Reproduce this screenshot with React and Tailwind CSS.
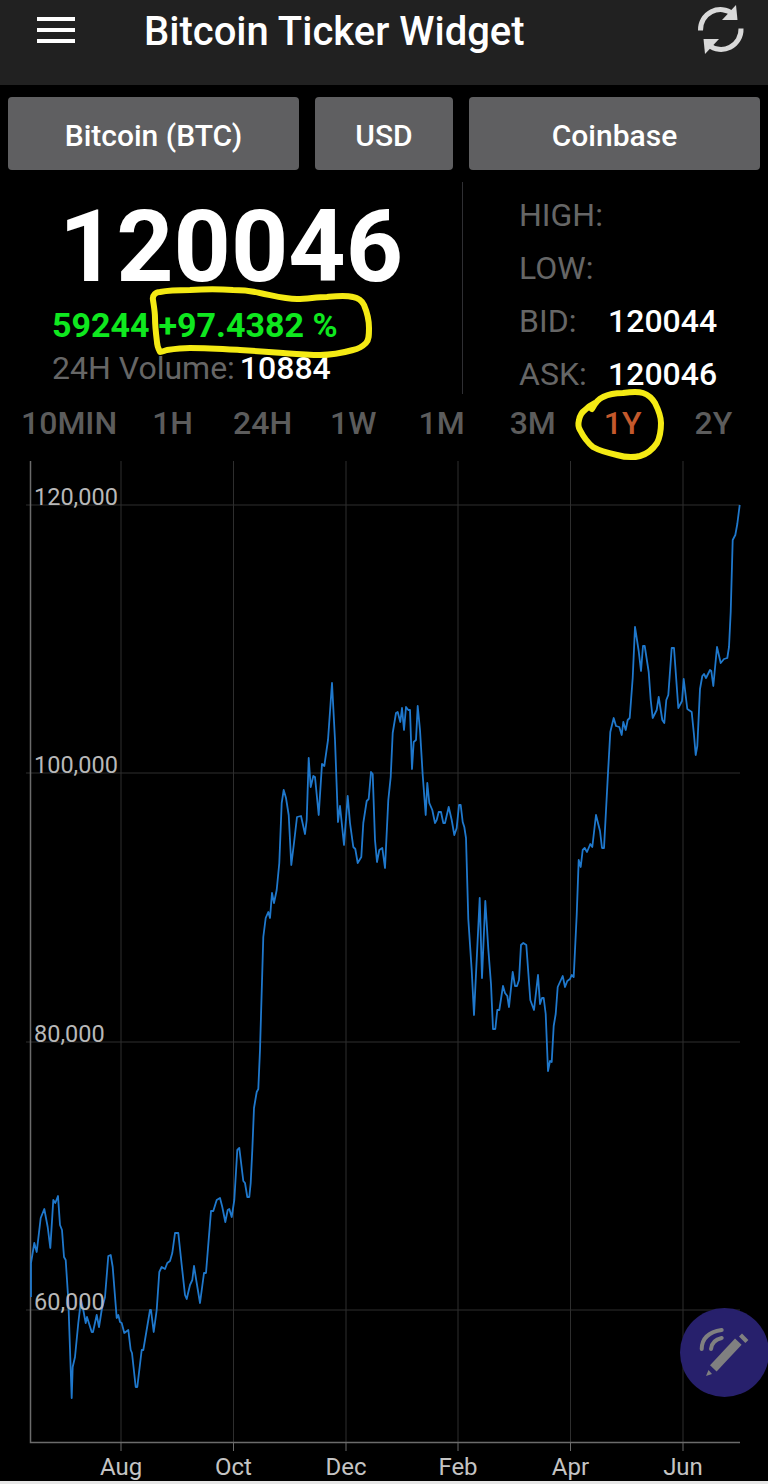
import React from "react";

const priceLine = "31,1297 31,1263 34.3,1243 36.7,1252 40.7,1218 44.3,1209 47.7,1227 50.3,1248 53.3,1200 55.3,1203 58,1196 60,1225 62,1230 64,1257 65.7,1260 68.3,1300 71.7,1398 72.7,1367 75,1357 78.3,1323 81,1300 83.3,1310 85.7,1323 87,1317 91.7,1332 93,1332 96.7,1315 99,1327 101.7,1310 105,1297 108.3,1256 110.7,1255 112.7,1267 116.7,1318 118.3,1315 120,1322 121.7,1323 124.3,1333 128.3,1330 130.7,1350 132,1353 135.7,1387 137.3,1387 141.7,1350 143.3,1350 150,1310 151,1310 153.7,1332 156.7,1310 159.3,1272 161.7,1267 165,1269 167.3,1263 170,1261 172.3,1253 175,1233 178.3,1233 181.7,1265 185,1295 186.7,1299 190,1285 192.3,1280 194,1266 196.7,1283 200,1303 204,1273 206,1273 211,1211 213.3,1211 216.7,1200 220,1198 222.3,1207 225.3,1222 227.7,1210 229.3,1209 231.7,1217 234.3,1200 237.3,1150 239.3,1148 243.3,1181 245,1183 247.3,1197 249.3,1197 250.7,1183 252.3,1150 254,1108 256.7,1092 258.3,1089 260,1050 263.3,937 265.7,918 268.3,912 270,918 272,893 274,903 276.7,890 279.3,863 281.7,803 283.7,790 286,798 288.7,815 291.3,865 294,843 297,817 301,816 305,834 306.7,820 308.7,758 310.7,787 313.3,776 315,777 318.7,815 322,764 324.3,766 328,740 332,683 335,740 338,822 340,806 344,845 347.7,796 350,823 353.3,847 355.3,849 357.7,863 361.3,857 363.3,823 366.7,801 368.7,799 371,772 372.7,774 375,840 377,862 379.3,850 382.3,848 385,868 388.3,800 390.7,777 392.7,733 396,713 397.7,712 400.3,722 402,708 404,730 406,707 408.3,710 410,710 412,769 413.7,742 416,740 417.7,706 420,730 422.7,775 425.7,815 427.3,783 429.3,803 432.3,810 435,823 436.7,820 438.7,812 441,812 443.3,823 445,823 448.7,807 451.7,820 454.3,835 456.7,828 459,805 460.7,805 462.7,822 464.3,827 466,838 468.3,919 471.7,970 474,1015 479.7,898 482,978 485.3,901 488.3,949 491,984 493,1029 495.3,1029 497.3,1010 499.3,1010 503,986 505,993 507.3,996 509,1007 512.7,972 515,986 517,986 519,980 521,945 523.3,943 526.3,945 530.3,1000 534,1010 538,975 540,1004 542,998 543.7,998 545.7,1014 548,1071 550,1061 551.7,1062 553.7,1026 555.7,1014 557.7,987 562.7,976 565,987 567.3,981 570,979 571.7,975 573.7,977 576.7,915 578.7,860 580.7,867 582.7,850 584.7,848 587,852 590.3,844 592.3,847 596,815 600,831 602,848 604,848 608,773 610.3,732 613.7,718 616,726 619.3,727 621.7,735 623.3,722 625.7,730 627.7,720 629.7,718 632.7,678 635,627 638.7,651 641,671 643,646 644.7,646 648.7,672 650.7,700 652.7,718 656.7,710 658.7,697 662.3,720 664.3,723 666.3,700 668.3,695 671.7,648 674,648 678.3,708 682,701 683.7,679 687.3,709 691.7,712 694,735 695.7,755 697.3,746 700,689 702.3,676 704,674 706,678 710,670 711.3,671 713.3,686 717,647 720.7,663 724,659 727.3,658 729,647 730.7,612 732.7,540 735.3,535 737.3,524 739.7,505";

const tabs = [
	{ label: "10MIN", className: "ml-[21px] text-[#5c5c5c]" },
	{ label: "1H", className: "ml-[35px] text-[#5c5c5c]" },
	{ label: "24H", className: "ml-[40px] text-[#5c5c5c]" },
	{ label: "1W", className: "ml-[38px] text-[#5c5c5c]" },
	{ label: "1M", className: "ml-[42px] text-[#5c5c5c]" },
	{ label: "3M", className: "ml-[45px] text-[#5c5c5c]" },
	{ label: "1Y", className: "ml-[48px] text-[#c4592c]" },
	{ label: "2Y", className: "ml-[53px] text-[#5c5c5c]" },
];

const monthLines = [121, 233.5, 346, 458, 570.5, 683];
const months = ["Aug", "Oct", "Dec", "Feb", "Apr", "Jun"];
const priceLines = [
	{ y: 505, label: "120,000" },
	{ y: 773, label: "100,000" },
	{ y: 1042, label: "80,000" },
	{ y: 1310, label: "60,000" },
];

const stats = [
	{ label: "HIGH:", value: "" },
	{ label: "LOW:", value: "" },
	{ label: "BID:", value: "120044" },
	{ label: "ASK:", value: "120046" },
];

const RefreshIcon = () => (
	<svg width="50" height="54" viewBox="696 3 50 54" className="ml-auto mr-[22px] mt-[3px]">
		<path d="M700.5 30.5A20 20 0 0 1 733 14" fill="none" stroke="#d9d9d9" strokeWidth="5" />
		<polygon points="736,5 737.5,20 722,20" fill="#d9d9d9" />
		<path d="M741 28.5A20 20 0 0 1 708.5 45" fill="none" stroke="#d9d9d9" strokeWidth="5" />
		<polygon points="705,54 703.5,39 719,39" fill="#d9d9d9" />
	</svg>
);

const Chart = () => (
	<svg width="768" height="1021" viewBox="0 460 768 1021" className="block">
		{priceLines.map((line) => (
			<line key={line.y} x1="26" x2="740" y1={line.y} y2={line.y} stroke="#2e2e2e" strokeWidth="1" />
		))}
		{monthLines.map((x) => (
			<line key={x} x1={x} x2={x} y1="461" y2="1442" stroke="#2e2e2e" strokeWidth="1" />
		))}
		{monthLines.map((x) => (
			<line key={x} x1={x} x2={x} y1="1442" y2="1451" stroke="#6b6b6b" strokeWidth="1" />
		))}
		<path d="M30.5 461V1442.5H740" fill="none" stroke="#6b6b6b" strokeWidth="1.5" />
		<polyline points={priceLine} fill="none" stroke="#1f78cc" strokeWidth="1.8" strokeLinejoin="round" />
		{priceLines.map((line) => (
			<text key={line.label} x="34" y={line.y} fontSize="23.5" fill="#b8b8b8" fontFamily="Roboto, sans-serif">
				{line.label}
			</text>
		))}
		{months.map((month, i) => (
			<text key={month} x={monthLines[i]} y="1475" fontSize="24" textAnchor="middle" fill="#c4c4c4" fontFamily="Roboto, sans-serif">
				{month}
			</text>
		))}
	</svg>
);

const App = () => {
	return (
		<div className="relative w-[768px] h-[1484px] overflow-hidden bg-black font-['Roboto',sans-serif]">
			{/* app bar */}
			<div className="flex h-[85px] bg-[#212121]">
				<div className="ml-[37px] mt-[17px] flex h-fit w-[38px] flex-col gap-[7px]">
					<div className="h-[4px] bg-white"></div>
					<div className="h-[4px] bg-white"></div>
					<div className="h-[4px] bg-white"></div>
				</div>
				<div className="ml-[69px] mt-[10px] h-fit text-[40px] leading-[44px] font-medium text-white">
					Bitcoin Ticker Widget
				</div>
				<RefreshIcon />
			</div>

			{/* selectors */}
			<div className="mt-3 flex h-[73px] gap-4 px-2">
				<button className="flex-1 rounded-[4px] bg-[#5f5f61] pt-[3px] text-[30px] font-medium text-white">Bitcoin (BTC)</button>
				<button className="w-[138px] rounded-[4px] bg-[#5f5f61] pt-[3px] text-[30px] font-medium text-white">USD</button>
				<button className="flex-1 rounded-[4px] bg-[#5f5f61] pt-[3px] text-[30px] font-medium text-white">Coinbase</button>
			</div>

			{/* prices */}
			<div className="mt-3 flex h-[212px]">
				<div className="w-[463px] border-r border-[#2f2f33]">
					<div className="mt-[15px] text-center text-[100px] leading-[100px] font-bold text-white">120046</div>
					<div className="mt-[6px] flex h-[44px] items-center gap-[9px] pl-[52px] text-[34px] font-bold text-[#0fe81f]">
						<span>59244</span>
						<span>+97.4382 %</span>
					</div>
					<div className="-mt-[1px] flex h-[44px] items-center gap-[5px] pl-[52px]">
						<span className="text-[32px] text-[#666666]">24H Volume:</span>
						<span className="text-[32px] font-medium text-white">10884</span>
					</div>
				</div>
				<div className="pl-[56px] pt-[6px]">
					{stats.map((stat) => (
						<div key={stat.label} className="flex h-[53px] items-center">
							<span className="w-[89px] text-[32px] text-[#666666]">{stat.label}</span>
							<span className="text-[32px] font-medium text-white">{stat.value}</span>
						</div>
					))}
				</div>
			</div>

			{/* time ranges */}
			<div className="flex h-[58px] items-center">
				{tabs.map((tab) => (
					<span key={tab.label} className={`text-[32px] font-medium ${tab.className}`}>
						{tab.label}
					</span>
				))}
			</div>

			<div className="relative mt-2">
				<Chart />
				<div className="absolute left-[680px] top-[848px] h-[89px] w-[89px] rounded-full bg-[#27206c]">
					<svg width="89" height="89" viewBox="0 0 89 89">
						<path d="M21.7 41Q22 25 41.7 22" fill="none" stroke="#808080" strokeWidth="4" strokeLinecap="round" />
						<path d="M31 41Q32 32 41.7 30" fill="none" stroke="#808080" strokeWidth="4" strokeLinecap="round" />
						<line x1="33.3" y1="60.3" x2="58.3" y2="33.7" stroke="#808080" strokeWidth="9" />
						<line x1="62.2" y1="31.8" x2="65.2" y2="28.8" stroke="#808080" strokeWidth="9" />
						<polygon points="26,68 28.5,62 32,66" fill="#808080" />
					</svg>
				</div>
			</div>
			<div className="h-[3px] bg-[#e6e6e6]"></div>

			{/* hand drawn marks on top of the screenshot */}
			<svg className="absolute left-0 top-0 pointer-events-none" width="768" height="1484" viewBox="0 0 768 1484">
				<path
					d="M153 300C152 295 156 292 160 292C170 290 180 290 190 290C205 289 220 289 233 290C245 290 252 291 260 293C275 296 285 299 297 299C308 299 316 297 327 297C337 296 345 295 353 297C359 298 362 301 364 305C367 312 369 320 369 328C369 335 369 340 366 343C362 347 358 349 353 350C342 353 332 355 320 355C308 355 296 354 283 353C268 352 255 351 240 350C223 349 207 348 190 348C181 348 174 349 167 350C164 351 162 352 160 352C158 348 157 345 157 342C156 334 155 326 155 318C155 312 154 307 153 300Z"
					fill="none"
					stroke="#f4ea14"
					strokeWidth="6"
					strokeLinejoin="round"
				/>
				<path
					d="M592 409C595 403 598 399 603 397C609 394 616 393 623 393C630 392 637 391 643 393C649 395 652 398 655 403C658 409 661 416 661 423C661 431 660 437 657 443C653 449 647 454 640 456C632 458 624 457 617 455C608 453 600 451 593 447C587 442 583 436 580 430C578 427 578 424 579 420C580 415 582 412 585 410C588 407 591 405 595 403"
					fill="none"
					stroke="#f4ea14"
					strokeWidth="6"
					strokeLinecap="round"
				/>
			</svg>
		</div>
	);
};

export default App;
